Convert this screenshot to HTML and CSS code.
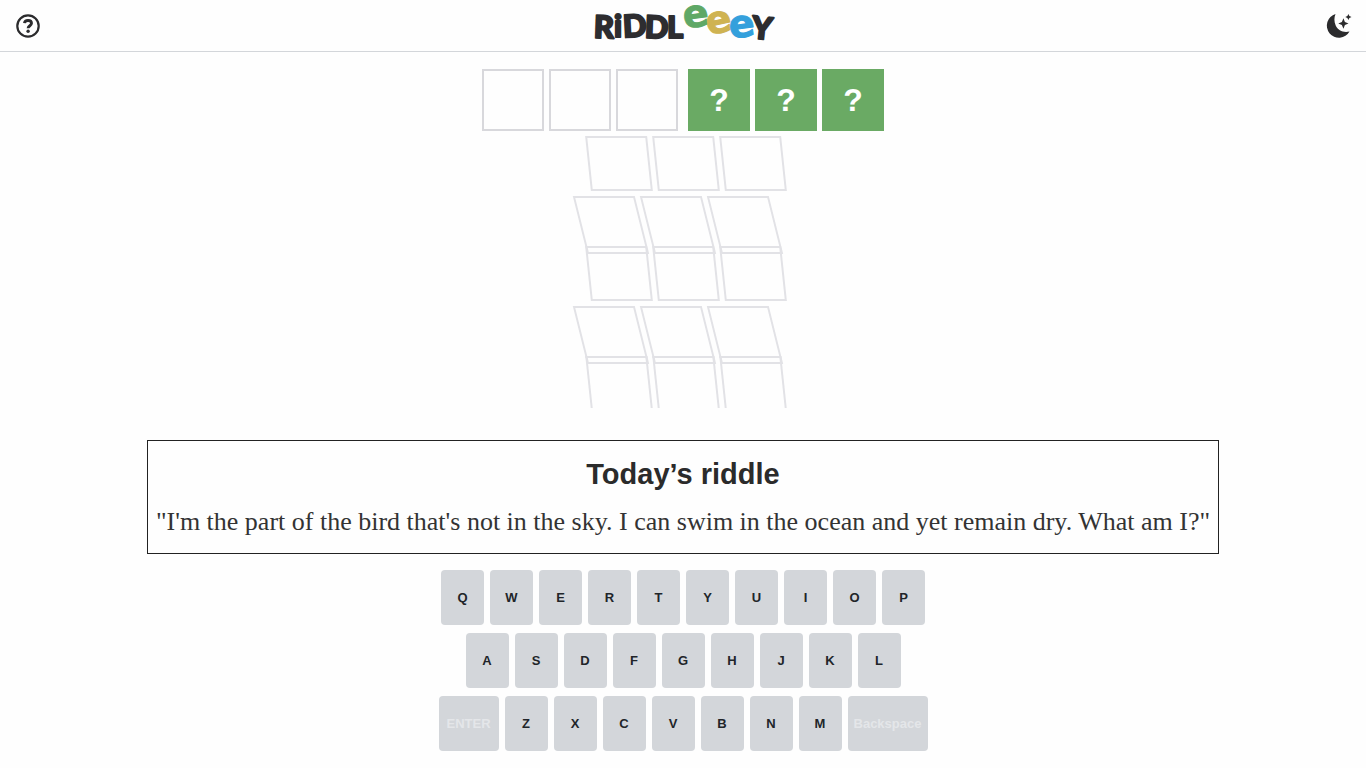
FILE: index.html
```html
<!DOCTYPE html>
<html lang="en">
<head>
<meta charset="utf-8">
<meta name="viewport" content="width=device-width, initial-scale=1">
<title>Riddleeey</title>
<link rel="stylesheet" href="styles.css">
</head>
<body>
<header class="header">
  <button class="icon-button" type="button" aria-label="Help">
    <svg width="24" height="24" viewBox="0 0 24 24" fill="none" stroke="currentColor" aria-hidden="true">
      <circle cx="12" cy="12" r="10.7" stroke-width="2.2"/>
      <path d="M8.500 9.200C8.700 7.400 10.200 6.500 12 6.500c2 0 3.500 1.100 3.500 2.800 0 2.400-3.300 2.400-3.400 4.900" stroke-width="2.900"/>
      <circle cx="12.100" cy="17.300" r="1.700" fill="currentColor" stroke="none"/>
    </svg>
  </button>
  <svg class="logo" width="182" height="50" viewBox="0 0 182 50" role="img" aria-label="Riddleeey">
    <g class="logo-dark">
      <text x="2" y="37" transform="rotate(2 12 26)">R</text>
      <text x="22" y="36">i</text>
      <text x="31" y="36" transform="rotate(-3 40 26)">D</text>
      <text x="53" y="37" transform="rotate(2 61 26)">D</text>
      <text x="75" y="37">L</text>
      <text x="160" y="38" transform="rotate(6 170 26)">Y</text>
    </g>
    <g class="logo-e">
      <text class="logo-green" x="91" y="26" transform="rotate(-8 103 16)">e</text>
      <text class="logo-gold" x="114" y="32" transform="rotate(-12 126 22)">e</text>
      <text class="logo-blue" x="137" y="36" transform="rotate(-8 150 26)">e</text>
    </g>
  </svg>
  <button class="icon-button" type="button" aria-label="Dark mode">
    <svg width="24" height="24" viewBox="0 0 24 24" fill="currentColor" aria-hidden="true">
      <path d="M9.500 0A12.100 12.100 0 1 0 23.500 17.500C17.500 19 12 16.500 9.700 11.500C8 7.500 8 3.500 9.500 0Z"/>
      <path d="M17.400 4.200L18.900 8L22.500 9.500L18.900 11L17.400 14.800L15.900 11L12.300 9.500L15.900 8Z"/>
      <path d="M22.400 0L23.400 2L25.500 3L23.400 4L22.400 6L21.400 4L19.300 3L21.400 2Z"/>
    </svg>
  </button>
</header>
<main class="game">
  <section class="board" aria-label="Guesses">
    <div class="answer">
      <div class="row"><div class="tile"></div><div class="tile"></div><div class="tile"></div></div>
      <div class="row"><div class="tile found">?</div><div class="tile found">?</div><div class="tile found">?</div></div>
    </div>
    <div class="row folded back"><div class="tile"></div><div class="tile"></div><div class="tile"></div></div>
    <div class="row folded front"><div class="tile"></div><div class="tile"></div><div class="tile"></div></div>
    <div class="row folded back"><div class="tile"></div><div class="tile"></div><div class="tile"></div></div>
    <div class="row folded front"><div class="tile"></div><div class="tile"></div><div class="tile"></div></div>
    <div class="row folded back"><div class="tile open"></div><div class="tile open"></div><div class="tile open"></div></div>
  </section>
  <section class="riddle">
    <h1 class="riddle-title">Today’s riddle</h1>
    <p class="riddle-text">"I'm the part of the bird that's not in the sky. I can swim in the ocean and yet remain dry. What am I?"</p>
  </section>
  <section class="keyboard" aria-label="Keyboard">
    <div class="keys">
      <button class="key" type="button">Q</button><button class="key" type="button">W</button><button class="key" type="button">E</button><button class="key" type="button">R</button><button class="key" type="button">T</button><button class="key" type="button">Y</button><button class="key" type="button">U</button><button class="key" type="button">I</button><button class="key" type="button">O</button><button class="key" type="button">P</button>
    </div>
    <div class="keys">
      <button class="key" type="button">A</button><button class="key" type="button">S</button><button class="key" type="button">D</button><button class="key" type="button">F</button><button class="key" type="button">G</button><button class="key" type="button">H</button><button class="key" type="button">J</button><button class="key" type="button">K</button><button class="key" type="button">L</button>
    </div>
    <div class="keys">
      <button class="key enter" type="button">ENTER</button><button class="key" type="button">Z</button><button class="key" type="button">X</button><button class="key" type="button">C</button><button class="key" type="button">V</button><button class="key" type="button">B</button><button class="key" type="button">N</button><button class="key" type="button">M</button><button class="key backspace" type="button">Backspace</button>
    </div>
  </section>
</main>
</body>
</html>
```
FILE: styles.css
```css
* { box-sizing: border-box; }
body {
  margin: 0;
  background: #fefefe;
  color: #2b2b2b;
  font-family: "Liberation Sans", Arial, sans-serif;
}
.header {
  display: flex;
  align-items: center;
  justify-content: space-between;
  height: 52px;
  padding: 0 16px;
  border-bottom: 1px solid #d3d6da;
}
.icon-button {
  display: flex;
  padding: 0;
  border: 0;
  background: none;
  color: #2b2b2d;
}
.icon-button svg { overflow: visible; }
.logo {
  overflow: visible;
  font-family: Lato, sans-serif;
  font-weight: 900;
  stroke-linejoin: round;
}
.logo-dark { font-size: 31px; fill: #2d2d30; stroke: #2d2d30; stroke-width: 2px; }
.logo-e { font-family: "DejaVu Sans", sans-serif; font-size: 38px; font-weight: bold; stroke-width: 1px; }
.logo-green { fill: #5fa866; stroke: #5fa866; }
.logo-gold { fill: #cfb352; stroke: #cfb352; }
.logo-blue { fill: #34a0dc; stroke: #34a0dc; }
.game {
  display: flex;
  flex-direction: column;
  align-items: center;
  padding: 17px 8px;
}
.board {
  display: flex;
  flex-direction: column;
  align-items: center;
  padding-bottom: 32px;
}
.answer { display: flex; gap: 10px; margin-bottom: 5px; }
.row { display: flex; gap: 5px; }
.tile {
  display: flex;
  align-items: center;
  justify-content: center;
  width: 62px;
  height: 62px;
  border: 2px solid #d8d8dc;
  font-size: 32px;
  font-weight: bold;
}
.found { border-color: #6aaa64; background: #6aaa64; color: #fff; }
.folded .tile { border-color: #e2e2e6; }
.back { padding-left: 6px; }
.back .tile { height: 55px; transform: skewX(6deg); }
.front { margin-top: 5px; margin-bottom: -8px; padding-right: 10px; }
.front .tile { height: 58px; transform: skewX(14deg); }
.folded .open { border-bottom: 0; height: 52px; }
.riddle {
  padding: 16px 8px;
  border: 1px solid #222;
  text-align: center;
}
.riddle-title { margin: 0 0 16px; font-size: 29px; line-height: 34px; }
.riddle-text {
  margin: 0;
  color: #333;
  font-family: "Liberation Serif", "Times New Roman", serif;
  font-size: 26px;
  line-height: 30px;
}
.keyboard {
  display: flex;
  flex-direction: column;
  gap: 8px;
  padding-top: 16px;
}
.keys { display: flex; justify-content: center; gap: 6px; }
.key {
  width: 43px;
  height: 55px;
  padding: 0;
  border: 0;
  border-radius: 4px;
  background: #d3d6da;
  color: #212529;
  font: bold 13px "Liberation Sans", Arial, sans-serif;
}
.enter, .backspace { color: #e4e6e9; }
.enter { width: 60px; }
.backspace { width: 80px; }
```
